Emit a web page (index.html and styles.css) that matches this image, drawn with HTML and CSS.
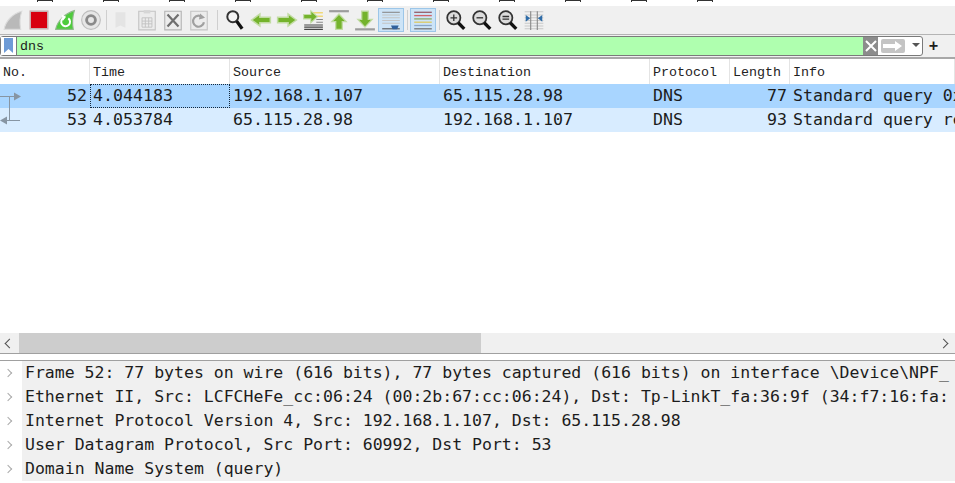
FILE: index.html
```html
<!DOCTYPE html>
<html lang="en">
<head>
    <meta charset="UTF-8">
    <title>Wireshark</title>
    <link rel="stylesheet" href="styles.css">
</head>
<body>
<div class="menu-strip">
    <span class="menu-bit"></span>
    <span class="menu-bit"></span>
    <span class="menu-bit"></span>
    <span class="menu-bit"></span>
    <span class="menu-bit"></span>
    <span class="menu-bit"></span>
    <span class="menu-bit"></span>
    <span class="menu-bit"></span>
    <span class="menu-bit"></span>
    <span class="menu-bit"></span>
    <span class="menu-bit"></span>
</div>
<div class="toolbar">
    <svg class="tool" viewBox="0 0 20 20"><path d="M2 18.500 C3 11 10 4 18 2 C16 8 16 13 17 18.500Z" fill="#b9b9b9" stroke="#dcdcdc"/></svg>
    <svg class="tool" viewBox="0 0 20 20"><rect x="2" y="2" width="16" height="16" fill="#d8000f" stroke="#c9b3b3" stroke-width="1.400"/></svg>
    <svg class="tool" viewBox="0 0 20 20"><path d="M1.500 18.500 C3 11 10 4 18.500 1.500 C16.500 8 16.500 13 17.500 18.500Z" fill="#4ecb3c" stroke="#8fb98a"/><path d="M13 8.500 A4 4 0 1 1 9 8" fill="none" stroke="#fff" stroke-width="1.800"/><path d="M7 5L11 7 8 11Z" fill="#fff"/></svg>
    <svg class="tool" viewBox="0 0 20 20"><circle cx="10" cy="10" r="8.500" fill="#e6e6e6" stroke="#bdbdbd"/><circle cx="10" cy="10" r="4" fill="#e6e6e6" stroke="#8a8a8a" stroke-width="2.600"/></svg>
    <span class="sep sep-a"></span>
    <svg class="tool tool-wide" viewBox="0 0 20 20"><path d="M5 3H14V17L9.500 15 5 17Z" fill="#e4e4e4"/></svg>
    <svg class="tool" viewBox="0 0 20 20"><path d="M2.500 2H17.500V19H2.500Z" fill="#ececec" stroke="#c4c4c4"/><path d="M7 1H13V4H7Z" fill="#d6d6d6"/><path d="M5.500 8H14.500V16.500H5.500ZM5.500 11H14.500M5.500 13.500H14.500M8.500 8V16.500M11.500 8V16.500" fill="none" stroke="#c0c0c0" stroke-width=".8"/></svg>
    <svg class="tool" viewBox="0 0 20 20"><path d="M2.500 2H17.500V19H2.500Z" fill="#ececec" stroke="#b4b4b4"/><path d="M5 5L15 16M15 5L5 16" stroke="#6f6f6f" stroke-width="2"/></svg>
    <svg class="tool" viewBox="0 0 20 20"><path d="M2.500 2H17.500V19H2.500Z" fill="#ececec" stroke="#c4c4c4"/><path d="M13.500 8A5 5 0 1 0 14.500 12" fill="none" stroke="#a0a0a0" stroke-width="2"/><path d="M11 4L15.500 8 10 9.500Z" fill="#a0a0a0"/></svg>
    <span class="sep sep-b"></span>
    <svg class="tool" viewBox="0 0 20 20"><circle cx="8" cy="7" r="5" fill="#f4f4f4" stroke="#333" stroke-width="1.800"/><path d="M11.500 11L16.500 18" stroke="#111" stroke-width="3"/></svg>
    <svg class="tool" viewBox="0 0 20 20"><path d="M1.500 10L9 4.500V7.500H18.500V12.500H9V15.500Z" fill="#74b32c" stroke="#c2dca4" stroke-width="1.400"/></svg>
    <svg class="tool" viewBox="0 0 20 20"><path d="M18.500 10L11 4.500V7.500H1.500V12.500H11V15.500Z" fill="#74b32c" stroke="#c2dca4" stroke-width="1.400"/></svg>
    <svg class="tool" viewBox="0 0 20 20"><path d="M9 3.500H19M12 6.500H19" stroke="#f0d878" stroke-width="1.400"/><path d="M13 9.500H19M13 12H19" stroke="#888" stroke-width="1"/><path d="M2 14.500H19M2 16.500H19M2 18.500H19" stroke="#444" stroke-width="1"/><path d="M1.500 5H8V1.500L14 7 8 12.500V9H1.500Z" fill="#74b32c" stroke="#c2dca4"/></svg>
    <svg class="tool" viewBox="0 0 20 20"><path d="M1 2H19" stroke="#9c9c9c" stroke-width="2"/><path d="M10 4.500L16.500 11.500H13V18.500H7V11.500H3.500Z" fill="#74b32c" stroke="#c2dca4" stroke-width="1.200"/></svg>
    <svg class="tool" viewBox="0 0 20 20"><path d="M1 18.500H19" stroke="#9c9c9c" stroke-width="2"/><path d="M10 16.500L16.500 9.500H13V2H7V9.500H3.500Z" fill="#74b32c" stroke="#c2dca4" stroke-width="1.200"/></svg>
    <span class="tool-on"><svg class="tool-in" viewBox="0 0 20 20"><path d="M2 3H18" stroke="#8a8a8a"/><path d="M2 5.500H18M2 8H18M2 10.500H18M2 13H18" stroke="#c4c4c4"/><path d="M2 18H18" stroke="#555"/><path d="M10 15H17L15.500 18.500H11.500Z" fill="#31619c"/></svg></span>
    <span class="sep sep-c"></span>
    <span class="tool-on"><svg class="tool-in" viewBox="0 0 20 20"><path d="M2 3H18" stroke="#96616b" stroke-width="1.200"/><path d="M2 6H18" stroke="#d0626a" stroke-width="1.200"/><path d="M2 9H18" stroke="#8aa86a" stroke-width="1.200"/><path d="M2 12H18" stroke="#dcca66" stroke-width="1.200"/><path d="M2 15H18" stroke="#8ba6c8" stroke-width="1.200"/><path d="M2 18H18" stroke="#777" stroke-width="1.200"/></svg></span>
    <span class="sep sep-d"></span>
    <svg class="tool" viewBox="0 0 20 20"><circle cx="8" cy="8" r="6" fill="#dcdcdc" stroke="#333" stroke-width="1.600"/><path d="M5 8H11M8 5V11" stroke="#333" stroke-width="1.200"/><path d="M12 12.500L17.500 18" stroke="#111" stroke-width="3"/></svg>
    <svg class="tool" viewBox="0 0 20 20"><circle cx="8" cy="8" r="6" fill="#dcdcdc" stroke="#333" stroke-width="1.600"/><path d="M5 8H11" stroke="#333" stroke-width="1.200"/><path d="M12 12.500L17.500 18" stroke="#111" stroke-width="3"/></svg>
    <svg class="tool" viewBox="0 0 20 20"><circle cx="8" cy="8" r="6" fill="#dcdcdc" stroke="#333" stroke-width="1.600"/><path d="M5 6.800H11M5 9.200H11" stroke="#333" stroke-width="1.200"/><path d="M12 12.500L17.500 18" stroke="#111" stroke-width="3"/></svg>
    <svg class="tool" viewBox="0 0 20 20"><path d="M1.500 2.500H18.500M1.500 5.500H18.500M1.500 8H18.500M1.500 10.500H18.500M1.500 13H18.500M1.500 15.500H18.500M1.500 18H18.500" stroke="#c8c8c8"/><path d="M7 2V19M13 2V19" stroke="#888"/><path d="M2.500 5.500L6.500 8.500 2.500 11.500ZM17.500 5.500L13.500 8.500 17.500 11.500Z" fill="#2f6ca8"/></svg>
</div>
<div class="filter-bar">
    <div class="filter-box">
        <span class="bookmark"><svg viewBox="0 0 10 16" width="10" height="16"><path d="M0 0H9V15L4.500 11 0 15Z" fill="#6e9bd6"/></svg></span>
        <span class="filter-text">dns</span>
        <span class="filter-clear"><svg viewBox="0 0 14 14" width="14" height="14"><path d="M2 2L12 12M12 2L2 12" stroke="#fff" stroke-width="2"/></svg></span>
        <span class="filter-apply"><svg viewBox="0 0 22 12" width="22" height="12"><path d="M1 4H13V1L20 6 13 11V8H1Z" fill="#fff"/></svg></span>
        <span class="filter-drop"></span>
    </div>
    <span class="filter-plus">+</span>
</div>
<div class="packet-list">
    <div class="row head">
        <span class="c-no">No.</span><span class="c-time">Time</span><span class="c-src">Source</span><span class="c-dst">Destination</span><span class="c-proto">Protocol</span><span class="c-len">Length</span><span class="c-info">Info</span>
    </div>
    <div class="row selected">
        <span class="c-no num">52</span><span class="c-time focus">4.044183</span><span class="c-src">192.168.1.107</span><span class="c-dst">65.115.28.98</span><span class="c-proto">DNS</span><span class="c-len num">77</span><span class="c-info">Standard query 0x</span>
    </div>
    <div class="row related">
        <span class="c-no num">53</span><span class="c-time">4.053784</span><span class="c-src">65.115.28.98</span><span class="c-dst">192.168.1.107</span><span class="c-proto">DNS</span><span class="c-len num">93</span><span class="c-info">Standard query re</span>
    </div>
    <svg class="rel" viewBox="0 0 22 48" width="22" height="48"><path d="M0 12.500H15M9.500 12.500V36.500M6 36.500H20" fill="none" stroke="#8795a3"/><path d="M14 8.500L21 12.500 14 16.500Z" fill="#8795a3"/><path d="M7 32.500L0 36.500 7 40.500Z" fill="#8795a3"/></svg>
</div>
<div class="hscroll">
    <span class="arrow left"></span>
    <div class="track"><div class="thumb"></div></div>
    <span class="arrow right"></span>
</div>
<div class="details">
    <div class="line"><span class="chev"></span>Frame 52: 77 bytes on wire (616 bits), 77 bytes captured (616 bits) on interface \Device\NPF_</div>
    <div class="line"><span class="chev"></span>Ethernet II, Src: LCFCHeFe_cc:06:24 (00:2b:67:cc:06:24), Dst: Tp-LinkT_fa:36:9f (34:f7:16:fa:</div>
    <div class="line"><span class="chev"></span>Internet Protocol Version 4, Src: 192.168.1.107, Dst: 65.115.28.98</div>
    <div class="line"><span class="chev"></span>User Datagram Protocol, Src Port: 60992, Dst Port: 53</div>
    <div class="line"><span class="chev"></span>Domain Name System (query)</div>
</div>
</body>
</html>
```

FILE: styles.css
```css
html, body {
    margin: 0;
    height: 483px;
    overflow: hidden;
    background: #fff;
}
body {
    font-family: "DejaVu Sans Mono", monospace;
    color: #1c1c1c;
}
.menu-strip {
    height: 6px;
    display: flex;
    gap: 50px;
    padding-left: 37px;
    background: #fff;
}
.menu-bit {
    width: 14px;
    height: 1px;
    background: #333;
    border: solid #333;
    border-width: 0 1px;
    padding-bottom: 1px;
    background-clip: content-box;
}
.toolbar {
    height: 28px;
    display: flex;
    align-items: center;
    background: #f0f0f0;
    border-bottom: 1px solid #b4b4b4;
}
.tool {
    width: 22px;
    height: 22px;
    margin: 0 2px;
    flex: none;
}
.tool-in {
    width: 22px;
    height: 22px;
}
.tool-on {
    display: flex;
    align-items: center;
    justify-content: center;
    width: 26px;
    height: 24px;
    background: #cde4f7;
    border: 1px solid #9cc6e8;
    box-sizing: border-box;
}
.sep {
    width: 1px;
    height: 20px;
    background: #cfcfcf;
}
.sep-a { margin: 0 1px 0 2px; }
.sep-b { margin: 0 4px 0 5px; }
.sep-c { margin: 0 2px 0 3px; }
.sep-d { margin: 0 3px; }
.filter-bar {
    height: 22px;
    display: flex;
    align-items: center;
    background: #f0f0f0;
    border-bottom: 2px solid #a8a8a8;
}
.filter-box {
    width: 921px;
    height: 18px;
    display: flex;
    align-items: center;
    background: #fff;
    border: 1px solid #7a7a7a;
    border-radius: 3px;
}
.bookmark {
    width: 15px;
    height: 18px;
    display: flex;
    align-items: center;
    justify-content: center;
    background: #fff;
    border-right: 1px solid #7a7a7a;
}
.filter-text {
    flex: 1;
    height: 18px;
    line-height: 20px;
    overflow: hidden;
    padding-left: 3px;
    font-family: "Liberation Mono", monospace;
    font-size: 13.33px;
    background: #afffaf;
}
.filter-clear {
    width: 15px;
    height: 18px;
    display: flex;
    align-items: center;
    justify-content: center;
    background: #8c8c8c;
}
.filter-apply {
    width: 24px;
    height: 14px;
    margin-left: 3px;
    display: flex;
    align-items: center;
    justify-content: center;
    background: #c4c4c4;
    border-radius: 2px;
}
.filter-drop {
    width: 0;
    height: 0;
    margin: 0 2px 2px 7px;
    border-left: 4px solid transparent;
    border-right: 4px solid transparent;
    border-top: 4px solid #555;
}
.filter-plus {
    margin-left: 6px;
    font-size: 15px;
    font-weight: bold;
}
.packet-list {
    position: relative;
    height: 274px;
}
.row {
    display: flex;
    height: 24px;
    line-height: 24px;
    font-size: 16.6px;
}
.row span {
    box-sizing: border-box;
    padding-left: 3px;
    white-space: nowrap;
    overflow: hidden;
}
.head {
    height: 25px;
    line-height: 27px;
    font-family: "Liberation Mono", monospace;
    font-size: 13.33px;
    color: #222;
    background: #fff;
}
.head span {
    border-right: 1px solid #e4e4e4;
}
.selected {
    background: #a8d5ff;
}
.related {
    line-height: 23px;
    background: #d8ecff;
}
.rel {
    position: absolute;
    left: 0;
    top: 25px;
}
.c-no { width: 90px; }
.c-time { width: 140px; }
.c-src { width: 210px; }
.c-dst { width: 210px; }
.c-proto { width: 80px; }
.c-len { width: 60px; }
.c-info { flex: 1; }
.row .num {
    text-align: right;
    padding-right: 3px;
}
.row .focus {
    outline: 1px dotted #14283c;
    outline-offset: -1px;
}
.hscroll {
    height: 20px;
    display: flex;
    align-items: center;
    background: #f0f0f0;
    border-bottom: 1px solid #a0a0a0;
}
.track {
    flex: 1;
    height: 20px;
}
.thumb {
    width: 462px;
    height: 20px;
    background: #cdcdcd;
}
.arrow {
    width: 19px;
    height: 20px;
    position: relative;
}
.arrow::after {
    content: "";
    position: absolute;
    top: 7px;
    left: 6px;
    width: 6px;
    height: 6px;
    border-top: 1.500px solid #505050;
    border-left: 1.500px solid #505050;
    transform: rotate(-45deg);
}
.right::after {
    left: 4px;
    transform: rotate(135deg);
}
.details {
    margin-top: 6px;
    border-top: 1px solid #a0a0a0;
    background: #fff;
}
.line {
    height: 24px;
    line-height: 24px;
    font-size: 16.5px;
    white-space: nowrap;
    overflow: hidden;
    display: flex;
    background: #f0f0f0;
}
.chev {
    flex: none;
    width: 25px;
    height: 24px;
    position: relative;
    background: linear-gradient(to right, #fff 22px, #f0f0f0 22px);
}
.chev::after {
    content: "";
    position: absolute;
    left: 5px;
    top: 9px;
    width: 5px;
    height: 5px;
    border-top: 1.500px solid #aaa;
    border-right: 1.500px solid #aaa;
    transform: rotate(45deg);
}
```
